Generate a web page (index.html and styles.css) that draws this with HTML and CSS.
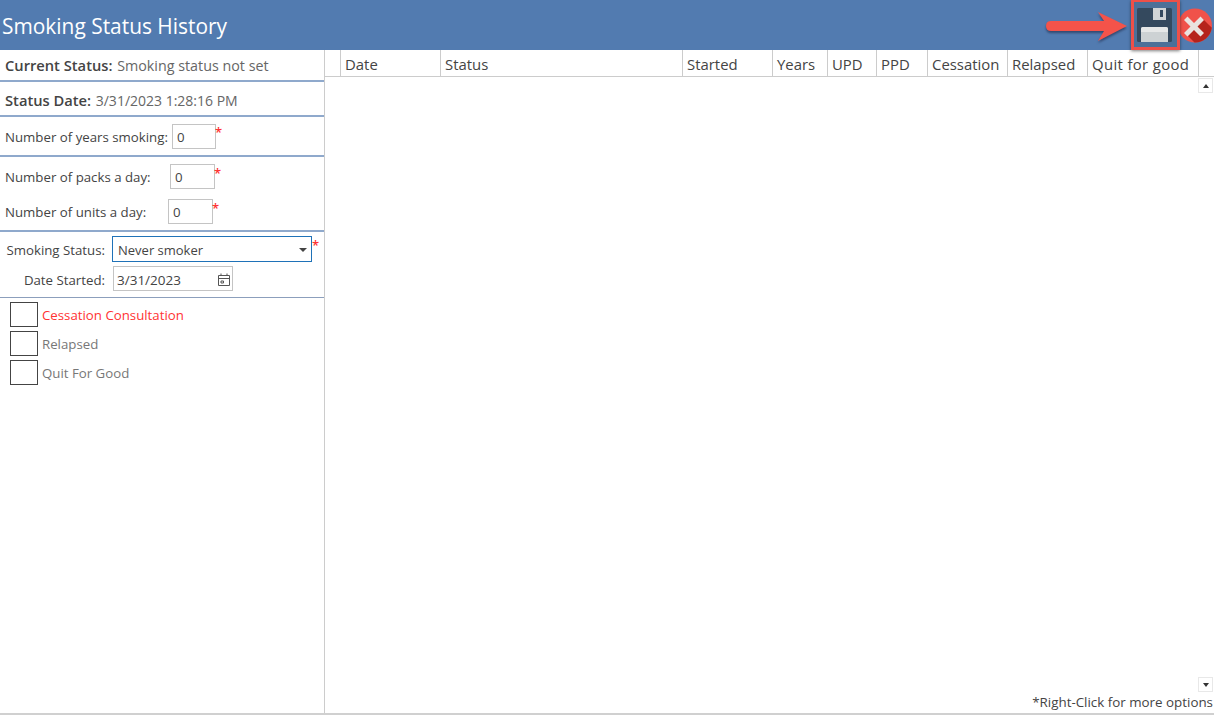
FILE: index.html
```html
<!DOCTYPE html>
<html>
<head>
<meta charset="utf-8">
<title>Smoking Status History</title>
<link rel="stylesheet" href="styles.css">
</head>
<body>
<div id="window">
  <div class="titlebar">
    <h1>Smoking Status History</h1>
    <div class="tools">
      <svg class="arrow" width="84" height="33" viewBox="0 0 84 33">
        <path d="M7 11H60L54 2L83 16L54 31L60 21H7Q2 21 2 16Q2 11 7 11Z" fill="#f4534a"/>
      </svg>
      <svg class="closeBtn" width="34" height="35" viewBox="0 0 34 35">
        <circle cx="17" cy="17.500" r="17" fill="#f0524a"/>
        <path d="M24.500 10.500L33.800 19.800A17 17 0 0 1 16.500 34.500L8.500 26.500Z" fill="#b5231b"/>
        <path d="M16 18.500m-10 -6.500l3.500 -3.500l6.500 6.500l6.500 -6.500l3.500 3.500l-6.500 6.500l6.500 6.500l-3.500 3.500l-6.500 -6.500l-6.500 6.500l-3.500 -3.500l6.500 -6.500Z" fill="#e9e3df"/>
      </svg>
      <div class="saveBox">
        <svg width="35" height="34" viewBox="0 0 35 34">
          <rect width="35" height="34" rx="1.500" fill="#34495e"/>
          <rect x="16" width="13" height="12" fill="#d0d4d6"/>
          <rect x="23" y="2" width="3" height="7" fill="#34495e"/>
          <path d="M4 34V21Q4 19 6 19H29Q31 19 31 21V34Z" fill="#cdd2d4"/>
          <path d="M4 24V21Q4 19 6 19H29Q31 19 31 21V24Z" fill="#e6e8e8"/>
        </svg>
      </div>
    </div>
  </div>
  <div class="main">
    <div class="leftPanel">
      <div class="section rowCurrent"><b>Current Status:</b>&nbsp;<span>Smoking status not set</span></div>
      <div class="section rowDate"><b>Status Date:</b>&nbsp;<span>3/31/2023 1:28:16 PM</span></div>
      <div class="section rowYears">
        <label>Number of years smoking:</label>
        <span class="numBox">0</span><span class="req">*</span>
      </div>
      <div class="section rowAmounts">
        <div class="amount">
          <label class="lblPacks">Number of packs a day:</label>
          <span class="numBox">0</span><span class="req">*</span>
        </div>
        <div class="amount">
          <label class="lblUnits">Number of units a day:</label>
          <span class="numBox">0</span><span class="req">*</span>
        </div>
      </div>
      <div class="section rowStatus">
        <div class="statusLine">
          <label class="lblRight">Smoking Status:</label>
          <div class="combo"><span>Never smoker</span><i class="caret"></i></div><span class="req">*</span>
        </div>
        <div class="statusLine">
          <label class="lblRight">Date Started:</label>
          <div class="datePick">
            <span>3/31/2023</span>
            <svg width="14" height="14" viewBox="0 0 14 14" fill="none" stroke="#555">
              <path d="M1.500 2.500H12.500V12.500H1.500ZM1.500 5.500H12.500M4 .5V2.500M10 .5V2.500M4 8H6.500V10H4Z"/>
            </svg>
          </div>
        </div>
      </div>
      <div class="checks">
        <div class="check red"><span class="box"></span>Cessation Consultation</div>
        <div class="check"><span class="box"></span>Relapsed</div>
        <div class="check"><span class="box"></span>Quit For Good</div>
      </div>
    </div>
    <div class="gridPanel">
      <div class="gridHead">
        <div class="col c0"></div>
        <div class="col c1">Date</div>
        <div class="col c2">Status</div>
        <div class="col c3">Started</div>
        <div class="col c4">Years</div>
        <div class="col c5">UPD</div>
        <div class="col c6">PPD</div>
        <div class="col c7">Cessation</div>
        <div class="col c8">Relapsed</div>
        <div class="col c9">Quit for good</div>
      </div>
      <div class="gridBody">
        <div class="scrollBar">
          <span class="scrollBtn"><i class="up"></i></span>
          <span class="scrollBtn"><i class="down"></i></span>
        </div>
      </div>
      <div class="hint">*Right-Click for more options</div>
    </div>
  </div>
</div>
</body>
</html>
```
FILE: styles.css
```css
html, body { margin: 0; padding: 0; }
body { background: #fff; font-family: "Open Sans", "Noto Sans", sans-serif; color: #444; font-size: 13.250px; overflow: hidden; }
#window { width: 1214px; height: 715px; display: flex; flex-direction: column; box-sizing: border-box; border-bottom: 2px solid #d0d0d0; }

.titlebar { height: 50px; flex: none; background: #527bb0; display: flex; justify-content: space-between; align-items: flex-start; }
h1 { margin: 0; padding: 10px 0 0 2px; font-size: 20.900px; font-weight: 400; color: #fff; line-height: 32px; }
.tools { position: relative; width: 170px; height: 50px; }
.arrow { position: absolute; left: 0; top: 10px; filter: drop-shadow(0 2px 1px rgba(30,40,70,.6)); }
.saveBox { position: absolute; left: 87px; top: 0; width: 49px; height: 50px; box-sizing: border-box; padding: 6px 0 0 3px; background: #4c7098; border: 3px solid #ee5048; border-top-width: 2px; box-shadow: 0 1px 3px rgba(0,0,0,.5); }
.saveBox svg { display: block; }
.closeBtn { position: absolute; left: 134px; top: 8px; }

.main { flex: 1; display: flex; min-height: 0; }
.leftPanel { width: 324px; flex: none; border-right: 1px solid #ccc; }
.section { border-bottom: 2px solid #8fa9cc; box-sizing: border-box; padding-left: 5px; display: flex; align-items: center; }
b { font-weight: 600; font-size: 14.700px; color: #444; margin-right: 1px; }
.rowCurrent { height: 32px; color: #666; font-size: 14.300px; }
.rowDate { height: 35px; padding-top: 3px; color: #666; font-size: 14px; }
.rowYears { height: 40px; padding-top: 1px; }
.rowYears .numBox { margin-top: -1px; }
.rowAmounts { height: 75px; display: block; padding-top: 2px; }
.amount { display: flex; height: 35px; align-items: center; }
.amount .numBox { width: 45px; }
.lblPacks { width: 165px; }
.lblUnits { width: 163px; }
.rowYears label { margin-right: 4px; }
.numBox { width: 44px; height: 25px; border: 1px solid #c4c4c4; box-sizing: border-box; padding-left: 4px; line-height: 25px; color: #444; }
.req { color: #f33; align-self: flex-start; font-size: 13px; font-weight: 600; line-height: 13px; margin: 5px 0 0 -1px; }
.rowYears .req { margin-top: 8px; }
.amount .req { margin-top: 8px; }

.rowStatus { height: 66px; display: block; padding: 4px 0 0 0; border-bottom: 1px solid #8c9fbc; }
.statusLine { display: flex; height: 26px; margin-bottom: 4px; }
.lblRight { width: 105px; text-align: right; line-height: 28px; margin-right: 7px; }
.combo { width: 200px; height: 26px; border: 1px solid #1f72b8; box-sizing: border-box; display: flex; justify-content: space-between; align-items: center; padding: 1px 4px 0 5px; color: #444; font-size: 13px; }
.caret { border: 4px solid transparent; border-top-color: #444; border-bottom: 0; }
.statusLine .req { margin-top: 3px; margin-left: 0; }
.datePick { width: 120px; height: 25px; margin-left: 1px; border: 1px solid #c4c4c4; box-sizing: border-box; display: flex; justify-content: space-between; align-items: center; padding: 2px 1px 0 3px; color: #444; font-size: 13.500px; }

.checks { padding: 4px 0 0 10px; }
.check { display: flex; align-items: center; height: 25px; margin-bottom: 4px; color: #777; }
.check.red { color: #f33; }
.box { width: 28px; height: 25px; box-sizing: border-box; border: 1px solid #444; margin-right: 4px; }

.gridPanel { flex: 1; display: flex; flex-direction: column; min-width: 0; }
.gridHead { display: flex; height: 27px; flex: none; border-bottom: 1px solid #ccc; box-sizing: border-box; font-size: 14.900px; color: #444; }
.col { box-sizing: border-box; border-right: 1px solid #ccc; padding-left: 4px; line-height: 29px; white-space: nowrap; }
.c0 { width: 16px; }
.c1 { width: 100px; }
.c2 { width: 242px; }
.c3 { width: 90px; }
.c4 { width: 55px; }
.c5 { width: 49px; }
.c6 { width: 51px; }
.c7 { width: 80px; }
.c8 { width: 80px; }
.c9 { width: 111px; letter-spacing: .35px; }
.gridBody { flex: 1; display: flex; justify-content: flex-end; min-height: 0; }
.scrollBar { width: 15px; margin-right: 1px; display: flex; flex-direction: column; justify-content: space-between; padding: 1px 0 0; }
.scrollBtn { width: 15px; height: 15px; box-sizing: border-box; border: 1px solid #e8e8e8; display: flex; align-items: center; justify-content: center; }
.up { border: 3px solid transparent; border-bottom: 4px solid #333; border-top: 0; }
.down { border: 3px solid transparent; border-top: 4px solid #333; border-bottom: 0; }
.hint { height: 21px; flex: none; text-align: right; padding-right: 1px; font-size: 13.370px; line-height: 21px; color: #444; }
```
